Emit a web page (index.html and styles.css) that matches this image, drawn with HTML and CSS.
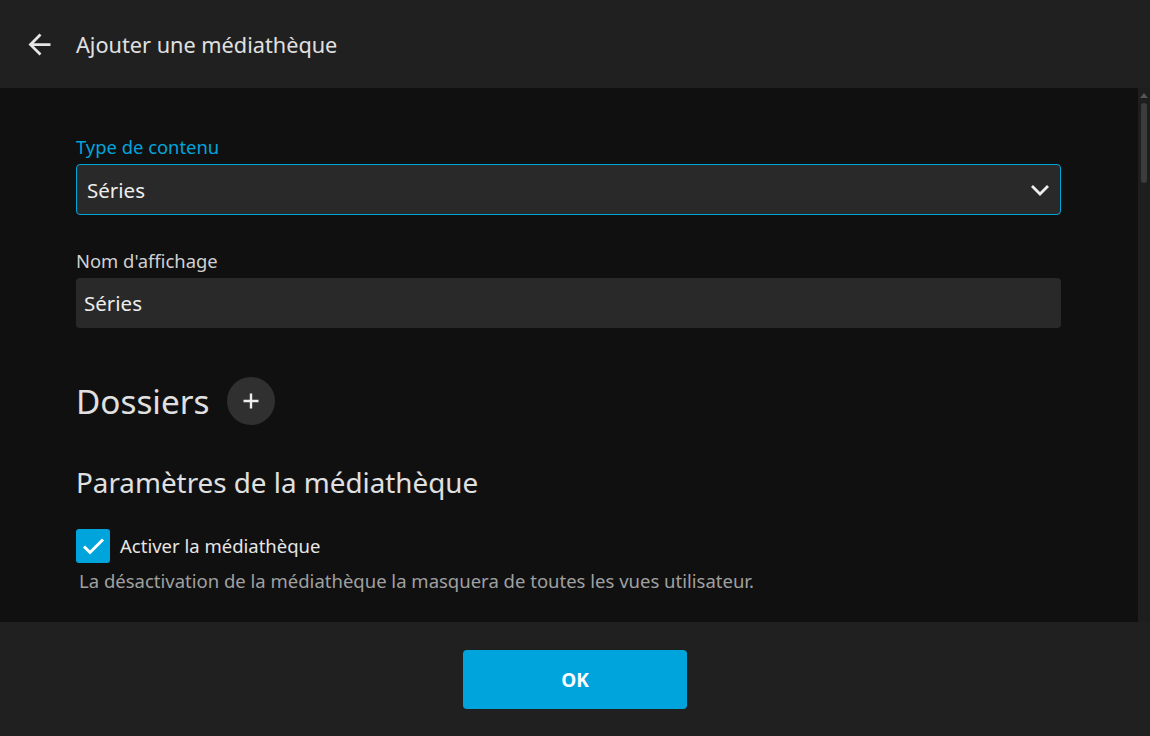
FILE: index.html
```html
<!DOCTYPE html>
<html lang="fr">
<head>
<meta charset="utf-8">
<title>Ajouter une médiathèque</title>
<link rel="stylesheet" href="styles.css">
</head>
<body>
<div class="dialog">
  <header class="header">
    <button class="back" aria-label="Retour">
      <svg width="33" height="33" viewBox="0 0 24 24"><path d="M20 11H7.83l5.59-5.59L12 4l-8 8 8 8 1.41-1.41L7.83 13H20v-2z" fill="#e6e6e6"/></svg>
    </button>
    <h3 class="title">Ajouter une médiathèque</h3>
  </header>
  <div class="body">
    <div class="content">
      <label class="label label-active">Type de contenu</label>
      <div class="select">
        <span>Séries</span>
        <svg class="chev" width="20" height="12" viewBox="0 0 20 12"><path d="M2 2l8 8 8-8" fill="none" stroke="#eee" stroke-width="2.8"/></svg>
      </div>
      <label class="label">Nom d'affichage</label>
      <div class="input">Séries</div>
      <div class="folders">
        <h1 class="h1">Dossiers</h1>
        <button class="add" aria-label="Ajouter">
          <svg width="18" height="18" viewBox="0 0 18 18"><path d="M9 1.5v15M1.5 9h15" stroke="#eee" stroke-width="2.4"/></svg>
        </button>
      </div>
      <h2 class="h2">Paramètres de la médiathèque</h2>
      <div class="check-row">
        <span class="checkbox">
          <svg width="26" height="26" viewBox="0 0 26 26"><path d="M4 13.5l6 6L23 6.5" fill="none" stroke="#fff" stroke-width="3"/></svg>
        </span>
        <span class="check-label">Activer la médiathèque</span>
      </div>
      <div class="desc">La désactivation de la médiathèque la masquera de toutes les vues utilisateur.</div>
    </div>
    <div class="scrollbar">
      <div class="arrow-up"></div>
      <div class="thumb"></div>
    </div>
  </div>
  <footer class="footer">
    <button class="ok">OK</button>
  </footer>
</div>
</body>
</html>
```
FILE: styles.css
```css
html, body {
  margin: 0;
  padding: 0;
  background: #101010;
  font-family: "Noto Sans", "Open Sans", sans-serif;
  color: #ddd;
}
.dialog {
  width: 1150px;
  height: 736px;
  display: flex;
  flex-direction: column;
}
.header {
  height: 88px;
  flex: none;
  background: #202020;
  display: flex;
  align-items: center;
}
.back {
  background: none;
  border: 0;
  padding: 0;
  margin-left: 23px;
  width: 33px;
  height: 33px;
  display: flex;
}
.title {
  margin: 0 0 0 20px;
  font-size: 21.7px;
  font-weight: 400;
  color: #e0e0e0;
}
.body {
  flex: 1;
  display: flex;
  min-height: 0;
}
.content {
  flex: 1;
  padding: 47px 77px 0 76px;
}
.label {
  display: block;
  font-size: 18.4px;
  line-height: 24px;
  color: #d0d0d0;
  margin-bottom: 5px;
}
.label-active {
  color: #00a4dc;
}
.select {
  height: 49px;
  border: 1px solid #00a4dc;
  border-radius: 4px;
  background: #292929;
  display: flex;
  align-items: center;
  justify-content: space-between;
  padding: 0 10px 0 10px;
  font-size: 20.5px;
  color: #eee;
  margin-bottom: 34px;
}
.chev {
  margin-right: 0;
}
.input {
  height: 50px;
  border-radius: 4px;
  background: #292929;
  display: flex;
  align-items: center;
  padding: 0 8px;
  font-size: 20.5px;
  color: #eee;
}
.folders {
  display: flex;
  align-items: center;
  margin-top: 49px;
  height: 48px;
}
.h1 {
  margin: 0;
  font-size: 33.3px;
  font-weight: 400;
  color: #e0e0e0;
}
.add {
  margin-left: 18px;
  width: 48px;
  height: 48px;
  border-radius: 50%;
  border: 0;
  background: #303030;
  display: flex;
  align-items: center;
  justify-content: center;
  padding: 0;
}
.h2 {
  margin: 40px 0 0;
  font-size: 27.8px;
  line-height: 34px;
  font-weight: 400;
  color: #e0e0e0;
}
.check-row {
  display: flex;
  align-items: center;
  margin-top: 30px;
}
.checkbox {
  width: 34px;
  height: 34px;
  border-radius: 3px;
  background: #00a4dc;
  display: flex;
  align-items: center;
  justify-content: center;
}
.check-label {
  margin-left: 10px;
  font-size: 18.5px;
  line-height: 26px;
  color: #e6e6e6;
}
.desc {
  margin: 5px 0 0 3px;
  font-size: 18.5px;
  line-height: 26px;
  color: #a0a0a0;
}
.scrollbar {
  width: 12px;
  flex: none;
  background: #1e1e1e;
  position: relative;
}
.arrow-up {
  position: absolute;
  left: 2px;
  top: 5px;
  width: 0;
  height: 0;
  border-left: 4px solid transparent;
  border-right: 4px solid transparent;
  border-bottom: 5px solid #555;
}
.thumb {
  position: absolute;
  left: 3px;
  top: 15px;
  width: 6px;
  height: 80px;
  border-radius: 3px;
  background: #3c3c3c;
}
.footer {
  height: 114px;
  flex: none;
  background: #202020;
  display: flex;
  align-items: flex-start;
  justify-content: center;
  padding-top: 28px;
  box-sizing: border-box;
}
.ok {
  width: 224px;
  height: 59px;
  border: 0;
  border-radius: 4px;
  background: #00a4dc;
  color: #fff;
  font-family: "Noto Sans", sans-serif;
  font-weight: 700;
  font-size: 19px;
}
```
